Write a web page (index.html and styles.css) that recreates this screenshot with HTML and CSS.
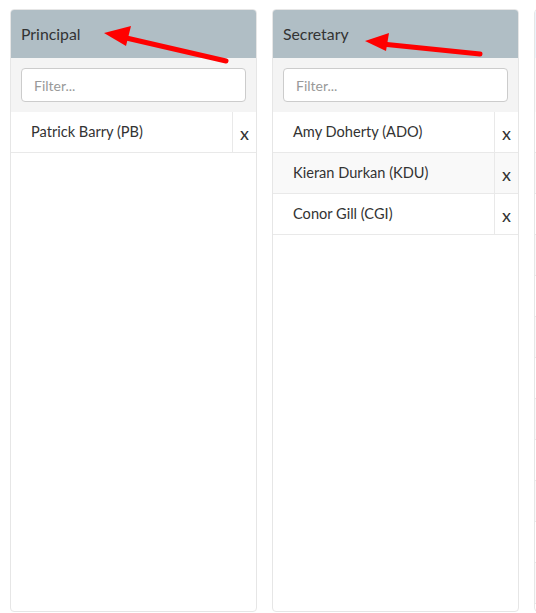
FILE: index.html
```html
<!DOCTYPE html>
<html lang="en">
<head>
    <meta charset="UTF-8">
    <title>Roles</title>
    <link rel="stylesheet" href="styles.css">
</head>
<body>
    <div class="board">
        <div class="role-panel">
            <div class="role-header">Principal</div>
            <div class="filter-box"><input type="text" placeholder="Filter..."></div>
            <div class="member-row"><span class="member-name">Patrick Barry (PB)</span><span class="member-remove">x</span></div>
        </div>
        <div class="role-panel">
            <div class="role-header">Secretary</div>
            <div class="filter-box"><input type="text" placeholder="Filter..."></div>
            <div class="member-row"><span class="member-name">Amy Doherty (ADO)</span><span class="member-remove">x</span></div>
            <div class="member-row"><span class="member-name">Kieran Durkan (KDU)</span><span class="member-remove">x</span></div>
            <div class="member-row"><span class="member-name">Conor Gill (CGI)</span><span class="member-remove">x</span></div>
        </div>
        <div class="role-panel faded">
            <div class="role-header"></div>
            <div class="filter-box"></div>
            <div class="member-row"></div>
            <div class="member-row"></div>
            <div class="member-row"></div>
            <div class="member-row"></div>
            <div class="member-row"></div>
            <div class="member-row"></div>
            <div class="member-row"></div>
            <div class="member-row"></div>
            <div class="member-row"></div>
            <div class="member-row"></div>
            <div class="member-row"></div>
            <div class="member-row"></div>
        </div>
    </div>

    <!-- annotation arrows drawn over the screenshot -->
    <svg class="arrows" width="536" height="613" viewBox="0 0 536 613">
        <line x1="226" y1="61" x2="122" y2="37" stroke="#ff0000" stroke-width="5" stroke-linecap="round"/>
        <polygon points="104,33 131,26 126,46" fill="#ff0000"/>
        <line x1="480" y1="54" x2="382" y2="44" stroke="#ff0000" stroke-width="5" stroke-linecap="round"/>
        <polygon points="365,41 389,33 386,51" fill="#ff0000"/>
    </svg>
</body>
</html>
```

FILE: styles.css
```css
body {
    margin: 0;
    font-family: 'Lato', sans-serif;
    background: #fff;
    overflow: hidden;
    height: 613px;
}

.board {
    display: flex;
    gap: 15px;
    padding: 9px 0 0 10px;
}

.role-panel {
    box-sizing: border-box;
    flex: 0 0 247px;
    height: 603px;
    border: 1px solid #e6e6e6;
    border-radius: 4px;
    overflow: hidden;
    background: #fff;
}

.role-header {
    background: #b0bec5;
    color: #333;
    font-size: 15.8px;
    height: 48px;
    line-height: 48px;
    padding: 0 10px;
}

.filter-box {
    background: #f4f4f4;
    height: 34px;
    padding: 10px;
}

.filter-box input {
    box-sizing: border-box;
    width: 100%;
    height: 34px;
    border: 1px solid #cccccc;
    border-radius: 4px;
    padding: 0 12px;
    font-family: 'Lato', sans-serif;
    font-size: 14px;
    color: #555;
    background: #fff;
}

.filter-box input::placeholder {
    color: #999;
}

.member-row {
    display: flex;
    height: 40px;
    border-bottom: 1px solid #e9e9e9;
    color: #333;
    font-size: 14.6px;
}

.member-row:nth-child(even) {
    background: #f9f9f9;
}

.member-name {
    flex: 1;
    padding: 11px 0 0 20px;
}

.member-remove {
    width: 24px;
    border-left: 1px solid #e9e9e9;
    font-size: 18px;
    text-align: center;
    padding-top: 10px;
    box-sizing: border-box;
}

.faded .role-header {
    background: #eaf4fb;
}

.faded .filter-box {
    background: #fafafa;
}

.arrows {
    position: absolute;
    top: 0;
    left: 0;
}
```
